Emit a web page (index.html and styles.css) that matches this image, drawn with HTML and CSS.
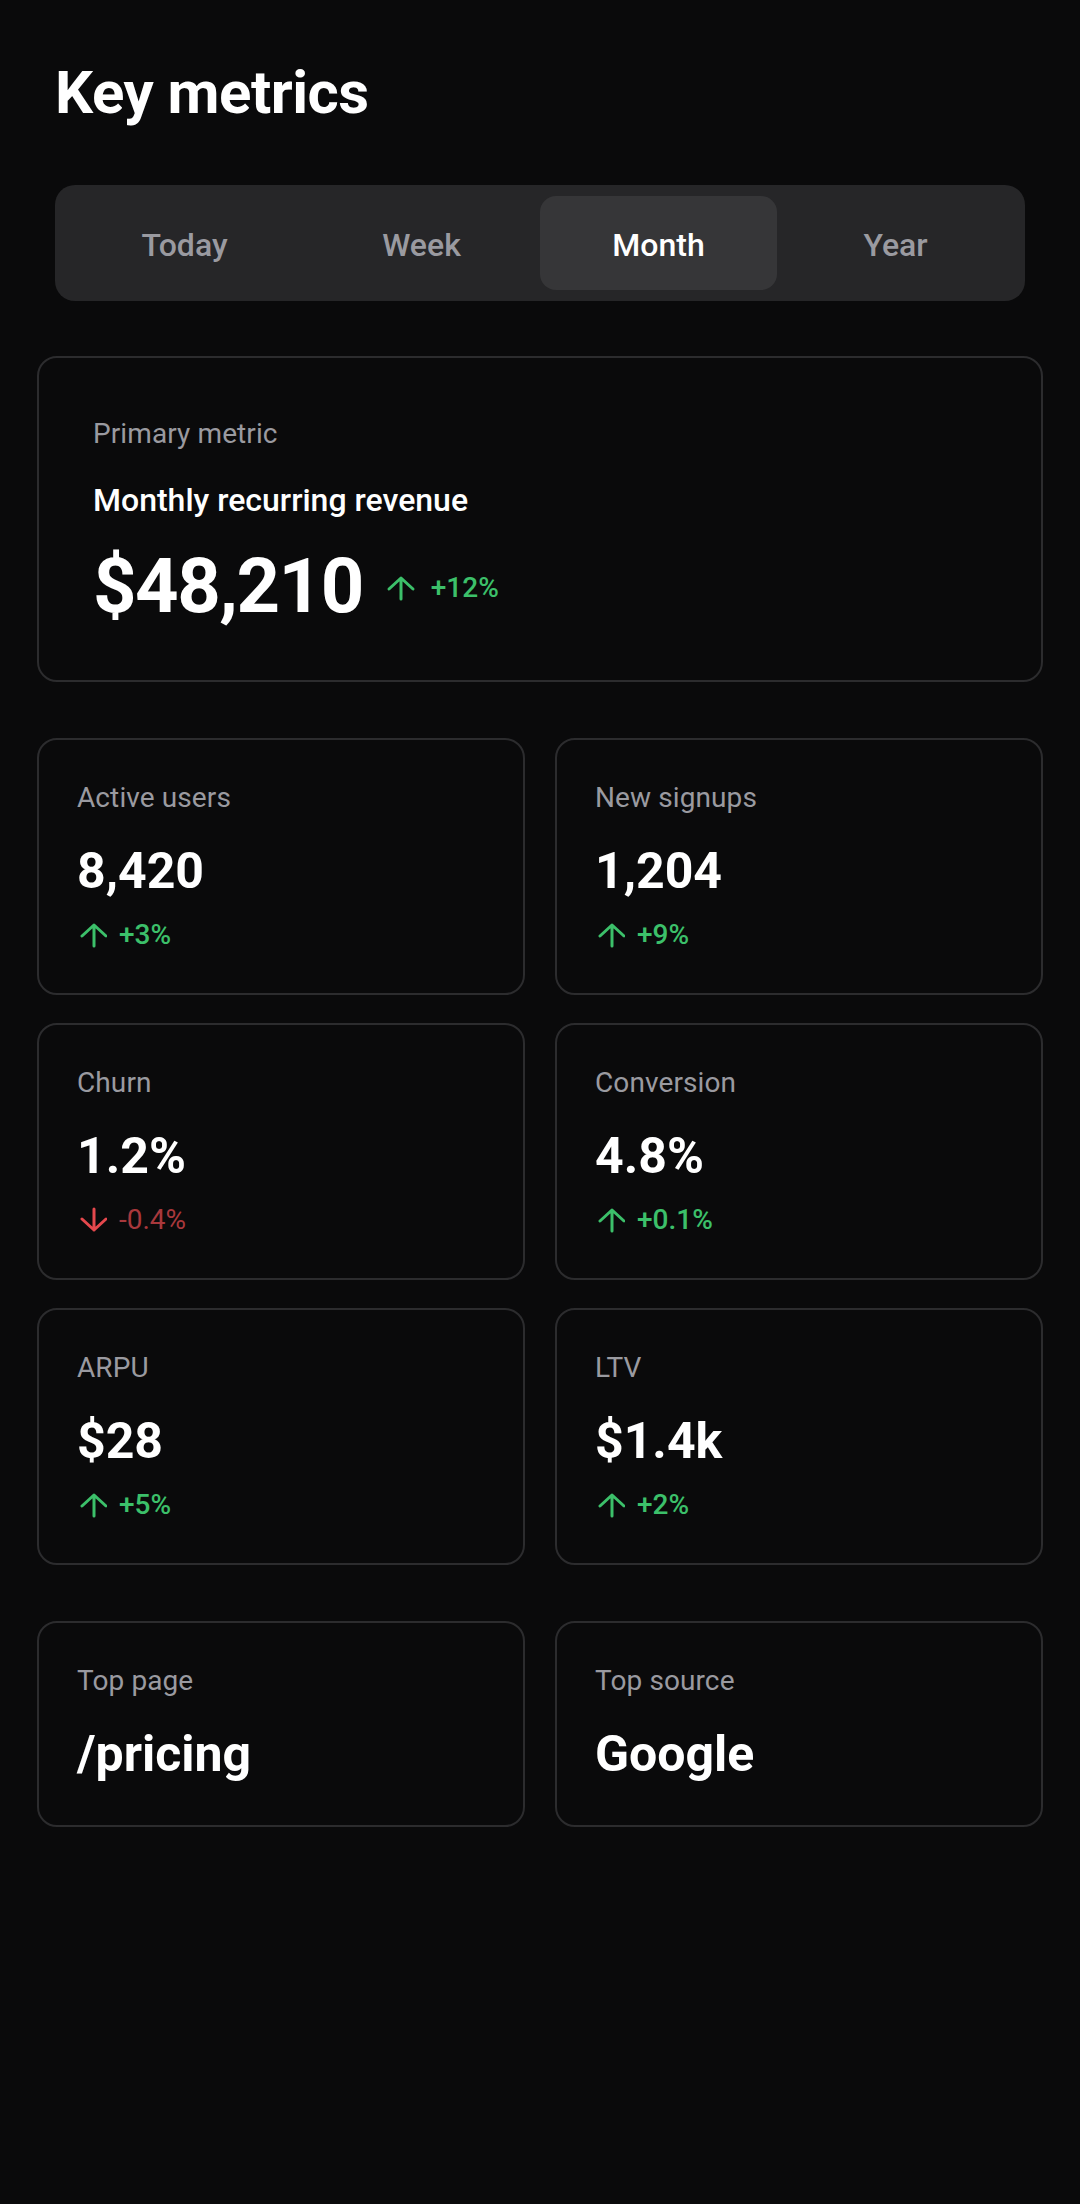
FILE: index.html
```html
<!DOCTYPE html>
<html lang="en">
<head>
    <meta charset="UTF-8">
    <meta name="viewport" content="width=device-width, initial-scale=1.0">
    <title>Key metrics</title>
    <link rel="stylesheet" href="styles.css">
</head>
<body>
    <main class="page">
        <header class="top">
            <h1>Key metrics</h1>
            <nav class="segments">
                <button class="segment">Today</button>
                <button class="segment">Week</button>
                <button class="segment active">Month</button>
                <button class="segment">Year</button>
            </nav>
        </header>

        <section class="card primary">
            <div class="label">Primary metric</div>
            <div class="primary-title">Monthly recurring revenue</div>
            <div class="primary-row">
                <div class="primary-value">$48,210</div>
                <div class="change up">
                    <svg class="arrow big" viewBox="0 0 32 26"><path d="M16 24V3M4 14L16 3l12 11"/></svg>
                    <span>+12%</span>
                </div>
            </div>
        </section>

        <section class="grid">
            <div class="card">
                <div class="label">Active users</div>
                <div class="value">8,420</div>
                <div class="change up">
                    <svg class="arrow" viewBox="0 0 30 26"><path d="M17 24V3M5 14L17 3l12 11"/></svg>
                    <span>+3%</span>
                </div>
            </div>
            <div class="card">
                <div class="label">New signups</div>
                <div class="value">1,204</div>
                <div class="change up">
                    <svg class="arrow" viewBox="0 0 30 26"><path d="M17 24V3M5 14L17 3l12 11"/></svg>
                    <span>+9%</span>
                </div>
            </div>
            <div class="card">
                <div class="label">Churn</div>
                <div class="value">1.2%</div>
                <div class="change down">
                    <svg class="arrow" viewBox="0 0 30 26"><path d="M17 2v21M5 12l12 11 12-11"/></svg>
                    <span>-0.4%</span>
                </div>
            </div>
            <div class="card">
                <div class="label">Conversion</div>
                <div class="value">4.8%</div>
                <div class="change up">
                    <svg class="arrow" viewBox="0 0 30 26"><path d="M17 24V3M5 14L17 3l12 11"/></svg>
                    <span>+0.1%</span>
                </div>
            </div>
            <div class="card">
                <div class="label">ARPU</div>
                <div class="value">$28</div>
                <div class="change up">
                    <svg class="arrow" viewBox="0 0 30 26"><path d="M17 24V3M5 14L17 3l12 11"/></svg>
                    <span>+5%</span>
                </div>
            </div>
            <div class="card">
                <div class="label">LTV</div>
                <div class="value">$1.4k</div>
                <div class="change up">
                    <svg class="arrow" viewBox="0 0 30 26"><path d="M17 24V3M5 14L17 3l12 11"/></svg>
                    <span>+2%</span>
                </div>
            </div>
        </section>

        <section class="grid bottom">
            <div class="card">
                <div class="label">Top page</div>
                <div class="value">/pricing</div>
            </div>
            <div class="card">
                <div class="label">Top source</div>
                <div class="value">Google</div>
            </div>
        </section>
    </main>
</body>
</html>
```

FILE: styles.css
```css
body {
    margin: 0;
    background: #0a0a0b;
    color: #fff;
    font-family: Roboto, "Liberation Sans", sans-serif;
    min-height: 100vh;
}
.page {
    padding: 57px 37px 80px;
}
.top {
    padding: 0 18px;
}
h1 {
    margin: 0;
    font-size: 60px;
    line-height: 72px;
    font-weight: 700;
    letter-spacing: -0.5px;
}
.segments {
    margin-top: 56px;
    display: grid;
    grid-template-columns: repeat(4, 1fr);
    padding: 11px;
    background: #262628;
    border-radius: 20px;
}
.segment {
    height: 94px;
    border: none;
    background: transparent;
    border-radius: 16px;
    font-family: inherit;
    font-size: 32px;
    font-weight: 500;
    color: #9a9aa0;
    padding: 3px 0 0;
}
.segment.active {
    background: #363638;
    color: #fff;
}
.card {
    border: 2px solid #2c2c2e;
    border-radius: 20px;
    background: #0a0a0b;
    padding: 41px 38px 41px;
}
.primary {
    margin-top: 55px;
    padding: 59px 54px 49px;
}
.label {
    font-size: 28px;
    line-height: 34px;
    color: #9a9aa0;
    letter-spacing: 0.1px;
}
.primary-title {
    margin-top: 29px;
    font-size: 32px;
    line-height: 40px;
    font-weight: 500;
}
.primary-row {
    margin-top: 21px;
    display: flex;
    align-items: center;
    gap: 22px;
}
.primary-value {
    font-size: 76px;
    line-height: 90px;
    font-weight: 700;
    letter-spacing: -1.5px;
}
.value {
    margin-top: 26px;
    font-size: 50px;
    line-height: 60px;
    font-weight: 700;
}
.change {
    display: flex;
    align-items: center;
    gap: 12px;
    margin-top: 17px;
    font-size: 28px;
    line-height: 34px;
    font-weight: 500;
}
.primary .change {
    margin-top: 4px;
    gap: 14px;
}
.change.up {
    color: #3cc06a;
}
.change.down {
    color: #a8383c;
    font-weight: 400;
}
.change.down .arrow {
    stroke: #e5484d;
}
.arrow {
    width: 30px;
    height: 26px;
    fill: none;
    stroke: #3cc06a;
    stroke-width: 3;
    stroke-linecap: round;
    stroke-linejoin: round;
}
.arrow.big {
    width: 32px;
    height: 26px;
}
.grid {
    margin-top: 56px;
    display: grid;
    grid-template-columns: 1fr 1fr;
    column-gap: 30px;
    row-gap: 28px;
}
```
